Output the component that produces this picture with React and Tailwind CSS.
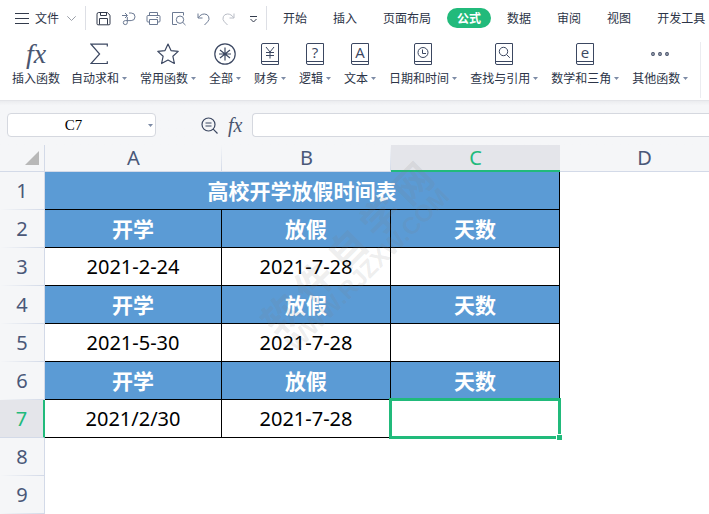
import React, { useState } from 'react';
import { clsx } from 'clsx';

const tabs = ['开始', '插入', '页面布局', '公式', '数据', '审阅', '视图', '开发工具'];

const rows = [
  { id: 2, head: true, cells: ['开学', '放假', '天数'] },
  { id: 3, cells: ['2021-2-24', '2021-7-28', ''] },
  { id: 4, head: true, cells: ['开学', '放假', '天数'] },
  { id: 5, cells: ['2021-5-30', '2021-7-28', ''] },
  { id: 6, head: true, cells: ['开学', '放假', '天数'] },
  { id: 7, cells: ['2021/2/30', '2021-7-28', ''] },
];

function Caret({ className }) {
  return (
    <svg viewBox="0 0 5 3" className={clsx('w-[5px] h-[3px] fill-[#7d8ba6]', className)}>
      <path d="M0 0h5L2.5 3z" />
    </svg>
  );
}

function Fx({ className }) {
  return (
    <span className={clsx("font-['Liberation_Serif',serif] italic leading-none text-[#4a5670]", className)}>fx</span>
  );
}

function Book({ letter, children }) {
  return (
    <svg viewBox="0 0 18 22" className="w-[18px] h-[22px]" fill="none" stroke="#3b4761">
      <path d="M17.5.5H2A1.5 1.5 0 0 0 .5 2v18A1.5 1.5 0 0 0 2 21.5h15.5zM.8 18.5h16.7" />
      {letter && (
        <text
          x="9"
          y="15"
          textAnchor="middle"
          fontSize="15"
          fontFamily="'Open Sans', sans-serif"
          fill="#3b4761"
          stroke="none"
        >
          {letter}
        </text>
      )}
      {children}
    </svg>
  );
}

const ribbon = [
  { label: '插入函数', plain: true, icon: <Fx className="text-[28px]" /> },
  {
    label: '自动求和',
    icon: (
      <svg viewBox="0 0 18 22" className="w-[18px] h-[22px]" fill="none" stroke="#3b4761" strokeWidth="1.2">
        <path d="M17.3 3.5V1.2H1l8.6 9.8L1 20.5h16.3v-2.3" />
      </svg>
    ),
  },
  {
    label: '常用函数',
    icon: (
      <svg viewBox="0 0 22 22" className="w-[22px] h-[22px]" fill="none" stroke="#3b4761" strokeWidth="1.2" strokeLinejoin="round">
        <path d="M11 1l3 6.6 7.2.8-5.3 4.9 1.5 7.2L11 17l-6.4 3.5 1.5-7.2L.8 8.4 8 7.6z" />
      </svg>
    ),
  },
  {
    label: '全部',
    icon: (
      <svg viewBox="0 0 22 22" className="w-[22px] h-[22px]" fill="none" stroke="#3b4761" strokeWidth="1.2">
        <circle cx="11" cy="11" r="10.2" />
        <path d="M11 4.5v13M6 7l10 8M16 7L6 15M5 11h12" />
      </svg>
    ),
  },
  {
    label: '财务',
    icon: (
      <Book>
        <path d="M5 4l4 5 4-5M9 9v6.5M5 9.5h8M5 12.5h8" />
      </Book>
    ),
  },
  { label: '逻辑', icon: <Book letter="?" /> },
  { label: '文本', icon: <Book letter="A" /> },
  {
    label: '日期和时间',
    icon: (
      <Book>
        <circle cx="9" cy="9.5" r="5" />
        <path d="M8.5 6.5v4H12" />
      </Book>
    ),
  },
  {
    label: '查找与引用',
    icon: (
      <Book>
        <circle cx="8.5" cy="8.5" r="4.2" />
        <path d="M11.5 11.5l3.3 3.3" />
      </Book>
    ),
  },
  { label: '数学和三角', icon: <Book letter="e" /> },
  {
    label: '其他函数',
    icon: (
      <svg viewBox="0 0 18 4" className="w-[18px] h-1" fill="none" stroke="#3b4761" strokeWidth="1.2">
        <circle cx="2" cy="2" r="1.3" />
        <circle cx="9" cy="2" r="1.3" />
        <circle cx="16" cy="2" r="1.3" />
      </svg>
    ),
  },
];

const quickActions = [
  {
    name: '保存',
    color: 'text-[#333b4c]',
    icon: <path d="M1 3.2A1.7 1.7 0 0 1 2.7 1.5h8.6l2.7 2.7v8.6a1 1 0 0 1-1 1H2a1 1 0 0 1-1-1zM3.5 13.5v-6h8v6M4.5 1.5v3h6M10.5 4.5v-3" />,
  },
  {
    name: '输出为PDF',
    color: 'text-[#6c7a93]',
    icon: <path d="M1 4.5h5M4 2l2.5 2.5L4 7M8 2h2.2a3.8 3.8 0 0 1 0 7.6H4.3a2 2 0 1 0 2 2V6" />,
  },
  {
    name: '打印',
    color: 'text-[#6c7a93]',
    icon: <path d="M3.5 4.5v-3h8v3M3.5 11H2a1 1 0 0 1-1-1V5.5a1 1 0 0 1 1-1h11a1 1 0 0 1 1 1V10a1 1 0 0 1-1 1h-1.5M3.5 8.5h8v5h-8zM10.5 6.5h1.5" />,
  },
  {
    name: '打印预览',
    color: 'text-[#6c7a93]',
    icon: <path d="M12.5 4.5v-3h-11v12H6M12.7 8.7a3.7 3.7 0 1 1-7.4 0 3.7 3.7 0 0 1 7.4 0zM11.7 11.3l2.8 2.8" />,
  },
  {
    name: '撤销',
    color: 'text-[#6c7a93]',
    icon: <path d="M2 2.5v4.5h4.5M2.3 6.7C4 4.2 6 3 8.5 3a4.5 4.5 0 0 1 3.2 7.7L8.500 14" />,
  },
  {
    name: '恢复',
    color: 'text-[#b9bdc6]',
    icon: <path d="M13 2.5v4.5H8.5M12.7 6.7C11 4.2 9 3 6.5 3a4.5 4.5 0 0 0-3.200 7.7L6.5 14" />,
  },
  {
    name: '自定义',
    color: 'text-[#333b4c]',
    icon: <path d="M4 5.5h7M4.5 8l3 3 3-3" />,
  },
];

function MenuBar({ active, onSelect }) {
  return (
    <header className="flex items-center h-9 pl-[15px] bg-white text-[12px] whitespace-nowrap">
      <button className="flex items-center shrink-0">
        <svg viewBox="0 0 14 11" className="w-3.5 h-[11px] mr-1.5" fill="none" stroke="#333b4c">
          <path d="M0 .5h14M0 5.5h14M0 10.5h14" />
        </svg>
        文件
        <svg viewBox="0 0 9 5" className="w-[9px] h-[5px] ml-2 mr-[9px]" fill="none" stroke="#9a9fa8">
          <path d="M.3.3l4.2 4.2L8.7.3" />
        </svg>
      </button>
      <div className="flex items-center gap-2.5 h-6 pl-2.5 pr-[5px] border-x border-[#dddfe5] shrink-0">
        {quickActions.map((a) => (
          <button key={a.name} aria-label={a.name} className={a.color}>
            <svg viewBox="0 0 15 15" className="w-[15px] h-[15px]" fill="none" stroke="currentColor">
              {a.icon}
            </svg>
          </button>
        ))}
      </div>
      <nav className="flex items-center gap-1.5 pl-1.5">
        {tabs.map((tab) => (
          <button
            key={tab}
            onClick={() => onSelect(tab)}
            className={clsx('h-5 px-2.5 rounded-full', tab === active && 'bg-[#21ba7b] text-white font-bold')}
          >
            {tab}
          </button>
        ))}
      </nav>
    </header>
  );
}

function Ribbon() {
  return (
    <div className="flex pl-3 pt-1.5 pb-0.5 bg-white text-[12px] whitespace-nowrap border-b border-[#e3e4e8]">
      <div className="flex gap-[13px] pr-3 pb-3 border-r border-[#ebecf0]">
        {ribbon.map((item) => (
          <button key={item.label} className={clsx('flex flex-col items-center gap-1 shrink-0', item.plain && '-mr-0.5')}>
            <span className="flex items-center justify-center h-6">{item.icon}</span>
            <span className="flex items-center gap-[3px] leading-4">
              {item.label}
              {!item.plain && <Caret />}
            </span>
          </button>
        ))}
      </div>
    </div>
  );
}

function FormulaBar() {
  const [name, setName] = useState('C7');
  const [formula, setFormula] = useState('');

  return (
    <div className="flex items-center pl-[7px] pt-3 pb-2 bg-linear-to-b from-[#ebecef] to-[#f5f6f8] to-10%">
      <div className="relative shrink-0">
        <input
          aria-label="名称框"
          value={name}
          onChange={(e) => setName(e.target.value)}
          className="block w-[149px] h-6 pr-4 text-center text-[15px] text-black font-['Liberation_Serif',serif] bg-white border border-[#d5d8df] rounded-sm"
        />
        <Caret className="absolute right-[3px] top-[11px]" />
      </div>
      <button aria-label="搜索函数" className="ml-[45px] mr-2.5 shrink-0">
        <svg viewBox="0 0 17 17" className="w-[17px] h-[17px]" fill="none" stroke="#3b4761" strokeWidth="1.2">
          <circle cx="7.5" cy="7.5" r="6.5" />
          <path d="M12.2 12.2l4.3 4.3M4.5 6h6M4.5 9h6" />
        </svg>
      </button>
      <button aria-label="插入函数" className="flex w-4 mr-2 shrink-0">
        <Fx className="text-[20px]" />
      </button>
      <input
        aria-label="编辑栏"
        value={formula}
        onChange={(e) => setFormula(e.target.value)}
        className="flex-1 min-w-0 h-6 px-2 bg-white border border-r-0 border-[#d5d8df] rounded-l-sm"
      />
    </div>
  );
}

function RowHead({ id }) {
  const selected = id === 7;
  return (
    <th
      scope="row"
      className={clsx(
        'h-[38px] font-normal',
        selected
          ? 'bg-[#e4e5ea] text-[#21ba7b] border-r-2 border-b border-r-[#21ba7b] border-b-[#d3dae8]'
          : 'bg-[#f5f6f8] text-[#4a5878] border-r border-[#d3dae8] bg-[linear-gradient(to_right,#f5f6f8,#d3dae8)] bg-no-repeat bg-bottom bg-size-[100%_1px]'
      )}
    >
      {id}
    </th>
  );
}

function ColumnHead({ name }) {
  const selected = name === 'C';
  return (
    <th
      scope="col"
      className={clsx(
        'h-[27px] font-normal leading-6',
        selected
          ? 'bg-[#e4e5ea] text-[#21ba7b] border-b-2 border-[#21ba7b]'
          : 'bg-[#f5f6f8] text-[#4a5878] border-b border-[#d3dae8] bg-[linear-gradient(#f5f6f8,#d3dae8)] bg-no-repeat bg-right bg-size-[1px_100%]'
      )}
    >
      {name}
    </th>
  );
}

function Sheet() {
  return (
    <main className="relative overflow-hidden font-['Noto_Sans','Noto_Sans_CJK_SC',sans-serif]">
      <table className="table-fixed w-full min-w-[729px] border-separate border-spacing-0 text-[20px] text-center leading-7 text-black">
        <colgroup>
          <col className="w-[45px]" />
          <col className="w-[177px]" />
          <col className="w-[169px]" />
          <col className="w-[169px]" />
          <col />
        </colgroup>
        <thead>
          <tr>
            <td className="bg-[#f5f6f8] border-r border-b border-[#d3dae8]">
              <svg viewBox="0 0 14 14" className="w-3.5 h-3.5 ml-auto mr-[5px] fill-[#b8b8b8]">
                <path d="M14 0v14H0z" />
              </svg>
            </td>
            {['A', 'B', 'C', 'D'].map((name) => (
              <ColumnHead key={name} name={name} />
            ))}
          </tr>
        </thead>
        <tbody>
          <tr>
            <RowHead id={1} />
            <td colSpan={3} className="bg-[#5b9bd5] text-white text-[21px] font-bold border-r border-b border-black">
              高校开学放假时间表
            </td>
            <td />
          </tr>
          {rows.map((row) => (
            <tr key={row.id}>
              <RowHead id={row.id} />
              {row.cells.map((text, i) => (
                <td
                  key={i}
                  className={clsx(
                    'relative border-r border-b border-black',
                    row.head && 'bg-[#5b9bd5] text-white text-[21px] font-bold'
                  )}
                >
                  {text}
                  {row.id === 7 && i === 2 && (
                    <span className="absolute -inset-0.5 z-10 border-3 border-[#21ba7b]">
                      <span className="absolute -right-1 -bottom-1 w-1.5 h-1.5 bg-[#21ba7b] border-l border-t border-white" />
                    </span>
                  )}
                </td>
              ))}
              <td />
            </tr>
          ))}
          {[8, 9].map((id) => (
            <tr key={id}>
              <RowHead id={id} />
              <td colSpan={4} />
            </tr>
          ))}
        </tbody>
      </table>

      {/* Watermark laid over the cells */}
      <div className="absolute left-[243px] top-[82px] w-[224px] -rotate-45 font-bold text-[#808080]/15 pointer-events-none select-none">
        <div className="flex justify-between text-[38px] leading-9">
          {['软', '件', '自', '学', '网'].map((c) => (
            <span key={c}>{c}</span>
          ))}
        </div>
        <div className="text-[24px] leading-6 text-center font-['Liberation_Sans',sans-serif]">WWW.RJZXW.COM</div>
      </div>
    </main>
  );
}

export default function App() {
  const [activeTab, setActiveTab] = useState('公式');

  return (
    <div className="min-h-screen overflow-hidden bg-white text-[#2c3447] font-['Noto_Sans_CJK_SC',sans-serif]">
      <MenuBar active={activeTab} onSelect={setActiveTab} />
      <Ribbon />
      <FormulaBar />
      <Sheet />
    </div>
  );
}
